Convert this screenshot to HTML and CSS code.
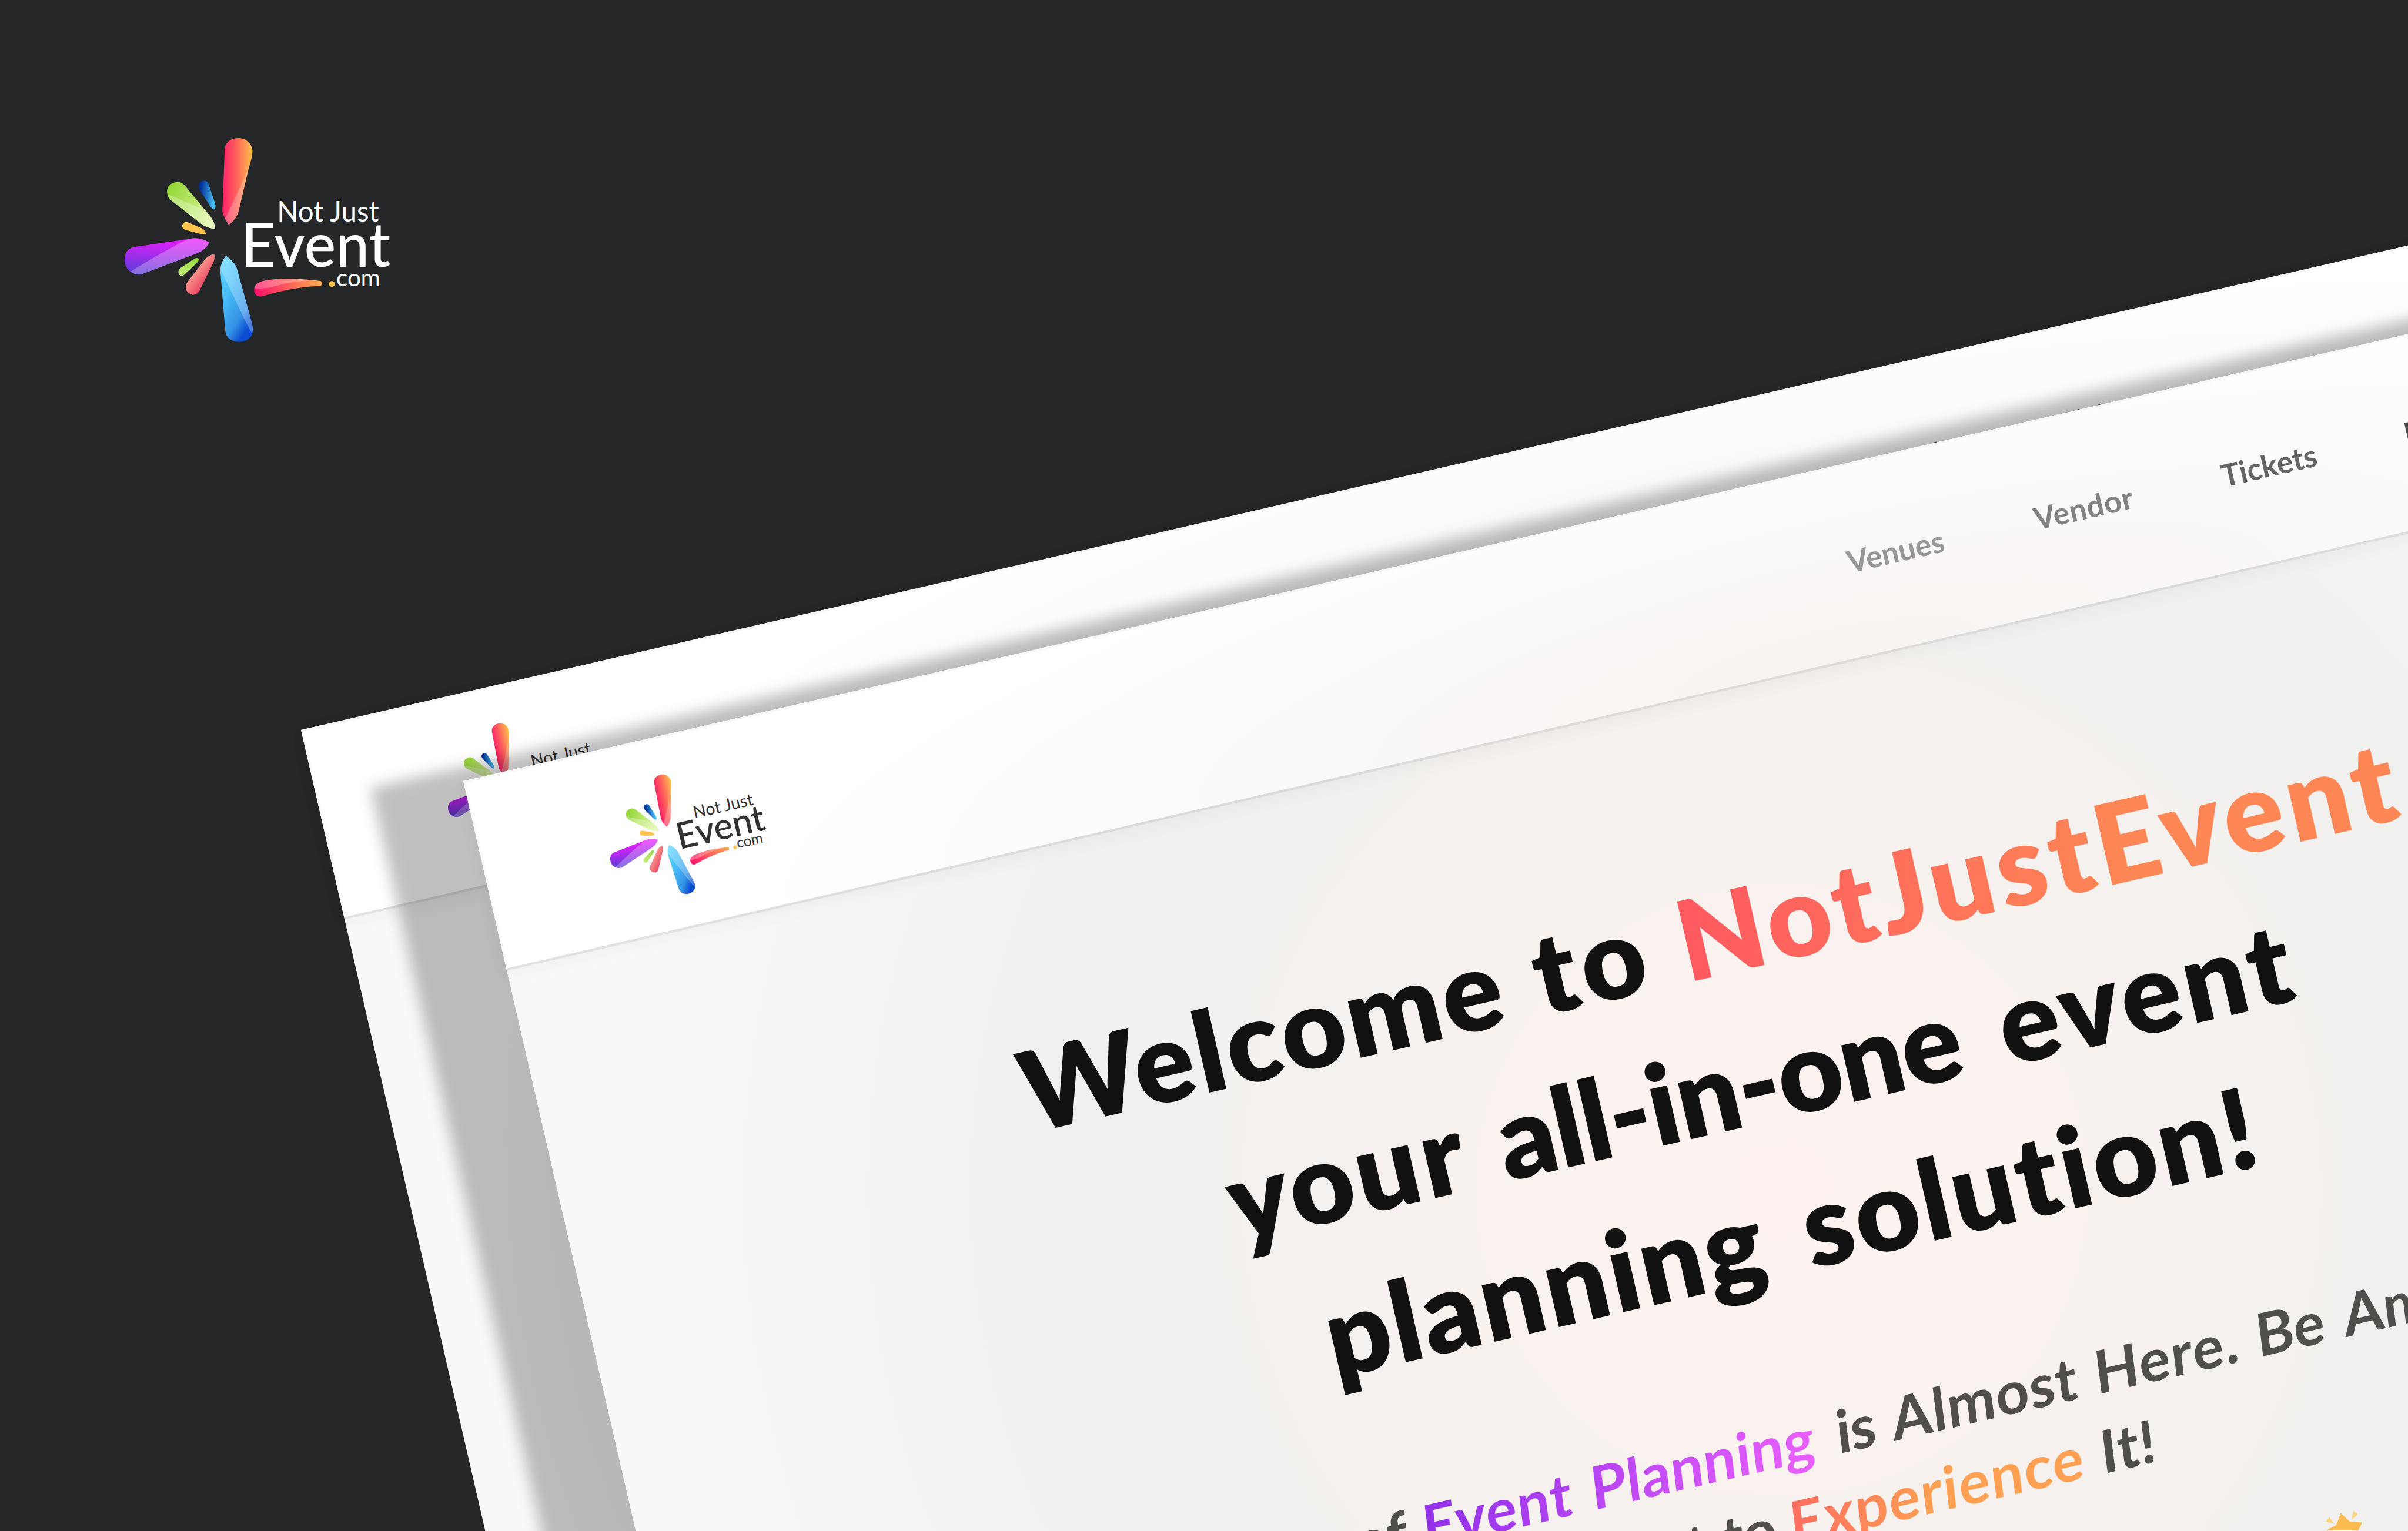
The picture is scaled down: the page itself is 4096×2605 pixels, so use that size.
FILE: index.html
```
<!DOCTYPE html>
<html lang="en">
<head>
<meta charset="utf-8">
<title>Not Just Event</title>
<link rel="stylesheet" href="styles.css">
</head>
<body>
<svg class="defs" aria-hidden="true">
  <defs>
    <linearGradient id="g-red" x1="0" x2="1" y1="0" y2="0"><stop offset="0" stop-color="#ff1f68"/><stop offset=".45" stop-color="#ff5f5c"/><stop offset="1" stop-color="#ffc24c"/></linearGradient>
    <linearGradient id="g-green" x1="0" x2="1" y1="0.1" y2=".7"><stop offset="0" stop-color="#90d632"/><stop offset="1" stop-color="#dff5a0"/></linearGradient>
    <linearGradient id="g-navy" x1="0" x2="1" y1="0.3" y2=".5"><stop offset=".1" stop-color="#00309a"/><stop offset="1" stop-color="#4cc4f4"/></linearGradient>
    <linearGradient id="g-purple" x1=".55" x2=".4" y1="0" y2="1"><stop offset=".05" stop-color="#e41ffb"/><stop offset="1" stop-color="#5a3cd8"/></linearGradient>
    <linearGradient id="g-lime" x1="0" x2="1" y1="1" y2="0"><stop offset="0" stop-color="#cbef80"/><stop offset="1" stop-color="#93d83c"/></linearGradient>
    <linearGradient id="g-salmon" x1=".2" x2=".7" y1=".3" y2=".85"><stop offset="0" stop-color="#fdb49c"/><stop offset="1" stop-color="#e8345a"/></linearGradient>
    <linearGradient id="g-blue" x1=".2" x2=".8" y1="0" y2="1"><stop offset="0" stop-color="#5ad4ff"/><stop offset=".3" stop-color="#4cc0f8"/><stop offset=".7" stop-color="#3492e6"/><stop offset=".9" stop-color="#0c4cd0"/></linearGradient>
    <linearGradient id="g-swoosh" x1="0" x2="1" y1=".5" y2=".4"><stop offset="0" stop-color="#ff1268"/><stop offset="1" stop-color="#ffaa4e"/></linearGradient>
    <symbol id="logo" viewBox="0 0 1568 1320" preserveAspectRatio="none">
      <path fill="url(#g-red)" d="M621 150C622 115 650 86 692 86C740 86 767 125 767 160C765 190 758 220 750 245L696 490C688 530 665 555 643 575C628 550 612 520 609 495Z"/>
      <path fill="#fff" fill-opacity=".25" d="M749 237L696 490C688 530 665 555 643 575L622 540Q720 330 749 237Z"/>
      <path fill="url(#g-green)" d="M320 400C312 360 340 334 372 333C395 333 405 345 413 355L545 525C562 550 570 570 570 596C545 596 520 585 505 575L340 437C328 428 322 415 320 400Z"/>
      <path fill="#fff" fill-opacity=".28" d="M320 400L515 490L545 525C562 550 570 570 570 596C545 596 520 585 505 575L340 437C328 428 322 415 320 400Z"/>
      <path fill="url(#g-navy)" d="M485 358C483 335 500 326 515 326C530 328 534 338 538 350L571 455C574 470 573 480 569 486C560 490 550 478 545 470L492 380Q486 370 485 358Z"/>
      <path fill="#ffc24a" d="M398 583C398 565 408 557 420 558C430 560 440 565 450 570L505 595Q518 605 523 624Q508 629 490 624L418 604Q400 598 398 583Z"/>
      <path fill="url(#g-purple)" d="M95 775C95 730 115 705 145 699L440 652Q490 640 541 674Q520 715 480 733L190 850Q160 862 125 838Q95 810 95 775Z"/>
      <path fill="#fff" fill-opacity=".27" d="M430 653Q490 640 541 674Q520 715 480 733L190 850Q160 862 125 838Q290 728 430 653Z"/>
      <path fill="url(#g-lime)" d="M378 838Q379 826 388 818L462 765Q480 755 485 768Q484 778 478 785L414 850Q404 862 392 862Q378 855 378 838Z"/>
      <path fill="url(#g-salmon)" d="M416 925Q418 905 430 890L520 765Q540 742 567 739Q570 765 562 785L493 935Q483 968 455 968Q418 960 416 925Z"/>
      <path fill="url(#g-blue)" d="M628 748Q670 780 684 815L765 1130Q775 1165 766 1190Q745 1233 695 1233Q630 1228 624 1170L598 830Q600 780 628 748Z"/>
      <path fill="#fff" fill-opacity=".27" d="M628 748Q670 780 684 815L765 1130Q773 1165 764 1186Q735 1130 700 1050L600 825Q602 780 628 748Z"/>
      <path fill="url(#g-swoosh)" d="M776 935Q778 900 830 888Q930 868 1080 885L1125 890Q1135 895 1134 905Q1130 918 1120 918Q980 925 830 972Q800 985 785 968Q774 955 776 935Z"/>
      <path fill="#fff" fill-opacity=".27" d="M776 932Q778 900 830 888Q930 868 1085 886Q950 895 900 915Q840 935 776 932Z"/>
      <ellipse fill="#ffc24a" cx="1184" cy="907" rx="15.500" ry="16.500"/>
      <g fill="currentColor" font-family="Lato, sans-serif">
        <text x="896" y="557" font-size="158" textLength="535" lengthAdjust="spacingAndGlyphs">Not Just</text>
        <text x="706" y="810" font-size="345" font-weight="500" textLength="786" lengthAdjust="spacingAndGlyphs">Event</text>
        <text x="1207" y="921" font-size="136" textLength="232" lengthAdjust="spacingAndGlyphs">com</text>
      </g>
    </symbol>
  </defs>
</svg>

<main class="stage">
  <svg class="brand"><use href="#logo"/></svg>

  <section class="card card-back" aria-hidden="true">
    <header class="bar">
      <svg class="bar-logo"><use href="#logo"/></svg>
      <nav class="nav">
        <a class="n1">Venues</a><a class="n2">Vendor</a><a class="n3">Tickets</a><a class="n4">Home</a><a class="n5">Login</a>
      </nav>
    </header>
  </section>

  <section class="card card-front">
    <header class="bar">
      <svg class="bar-logo"><use href="#logo"/></svg>
      <nav class="nav">
        <a class="n1">Venues</a><a class="n2">Vendor</a><a class="n3">Tickets</a><a class="n4">Home</a>
      </nav>
    </header>
    <h1 class="title">
      <span class="line t1"><span class="w-welcome">Welcome</span> <span class="w-to">to</span> <span class="w-brand">NotJustEvent</span><span>,</span></span>
      <span class="line t2"><span class="w-your">your</span> <span class="w-all">all-in-one</span> <span class="w-event">event</span></span>
      <span class="line t3"><span class="w-planning">planning</span> <span class="w-solution">solution!</span></span>
    </h1>
    <p class="lead">
      <span class="line s1"><span class="lead-start">The Future of</span> <span class="purple"><span class="w-ev">Event</span> <span class="w-pl">Planning</span></span> <span class="w-is">is</span> <span class="w-almost">Almost</span> <span class="w-here">Here.</span> <span class="w-be">Be</span> <span class="w-among">Among</span></span>
      <span class="line s2"><span class="lead-start">First to</span> <span class="orange">Experience</span> <span class="w-it">It!</span></span>
    </p>
  </section>

  <svg class="star" viewBox="430 250 216 114">
    <path fill="#fbbb50" d="M439 363L497 331L520 268Q522 265 525 268L572 313L637 317Q641 318 640 321L619 364V420H439Z"/>
    <path fill="#fad67c" d="M456 287L438 313L486 326ZM592 255L618 271L581 304Z"/>
  </svg>
</main>
</body>
</html>
```
FILE: styles.css
```
* { box-sizing: border-box; }

body {
  margin: 0;
  background: #242628;
  font-family: Lato, "Open Sans", sans-serif;
}

.defs {
  position: absolute;
  width: 0;
  height: 0;
}

.stage {
  position: relative;
  width: 4096px;
  height: 2605px;
  overflow: hidden;
  background: #242628;
}

.brand {
  position: absolute;
  left: 181.4px;
  top: 208.6px;
  width: 507.9px;
  height: 399.1px;
  color: #fff;
}

/* Tilted page mockups */
.card {
  position: absolute;
  width: 4060px;
  height: 3000px;
  transform: rotate(-12.95deg);
  transform-origin: 0 0;
  background: radial-gradient(circle at 2030px 1180px, #fdf2ef 0, #fbf2ef 300px, #f5f1ee 750px, #f0f0ef 1250px, #f3f3f3 1550px, #f8f8f8 1950px);
  color: #111;
}

.card-back { left: 511.9px; top: 1241.7px; }

.card-front {
  left: 788.4px;
  top: 1328.5px;
  box-shadow: -156px -24px 24px rgba(0, 0, 0, .25);
}

.bar {
  position: relative;
  display: flex;
  align-items: flex-start;
  height: 331px;
  border-top: 3px solid #f6f6f6;
  border-left: 3px solid #f9f9f9;
  border-bottom: 4px solid rgba(0, 0, 0, .09);
  background: radial-gradient(ellipse 1900px 420px at 2300px 100%, #f7f3f1, #fff) padding-box;
  box-shadow: 0 6px 30px rgba(0, 0, 0, .04);
}

.bar-logo {
  width: 304.8px;
  height: 239.5px;
  margin: 46px 0 0 191.7px;
  color: #333132;
}

.nav {
  display: flex;
  padding-top: 129px;
  font-size: 52px;
  line-height: 64px;
  font-weight: 700;
  white-space: nowrap;
}

.n1 { margin-left: 1878.500px; width: 326px; letter-spacing: -.2px; color: #989695; }
.n2 { width: 327px; letter-spacing: .7px; color: #848281; }
.n3 { width: 319px; color: #666564; }
.n4 { width: 266px; color: #4a4a4a; }
.card-back .nav a { color: #444; }

.line {
  display: flex;
  white-space: nowrap;
}

.title {
  margin: 266px 0 0;
  font-size: 190px;
  line-height: 261px;
  font-weight: 800;
}

.t1 { padding-left: 806.6px; }
.t2 { padding-left: 1107.8px; }
.t3 { padding-left: 1218px; }

.w-welcome { letter-spacing: 4.6px; }
.w-to { margin-left: 54.3px; letter-spacing: 9px; }
.w-brand {
  margin-left: 52.2px;
  letter-spacing: 8px;
  background: linear-gradient(102deg, #ff5a60 4%, #ff8755 62%);
  -webkit-background-clip: text;
  background-clip: text;
  color: transparent;
}
.w-your { letter-spacing: 5.7px; }
.w-all { margin-left: 57px; letter-spacing: -1.6px; }
.w-event { margin-left: 71px; letter-spacing: 6.4px; }
.w-planning { letter-spacing: 3.7px; }
.w-solution { margin-left: 68px; letter-spacing: 4.6px; }

.lead {
  margin: 154px 0 0;
  font-size: 100px;
  line-height: 134px;
  font-weight: 700;
  color: #504f4c;
}

.lead .line {
  transform: skewX(-6deg);
  transform-origin: 0 105.7px;
}

.lead-start { text-align: right; }
.s1 .lead-start { width: 1275px; }
.s2 .lead-start { width: 1888px; }

.purple, .orange {
  display: flex;
  -webkit-background-clip: text;
  background-clip: text;
  color: transparent;
}
.purple {
  margin-left: 27px;
  background-image: linear-gradient(100deg, #9030e8, #ea60ff);
}
.orange {
  margin-left: 24px;
  letter-spacing: 2px;
  background-image: linear-gradient(100deg, #ff6a60, #ffa052 50%);
}
.w-ev { letter-spacing: 1.4px; }
.w-pl { margin-left: 33px; letter-spacing: .6px; }
.w-is { margin-left: 39px; letter-spacing: -1px; }
.w-almost { margin-left: 29px; letter-spacing: 1.2px; }
.w-here { margin-left: 30.5px; letter-spacing: 2px; }
.w-be { margin-left: 30px; }
.w-among { margin-left: 33.5px; }
.w-it { margin-left: 29px; letter-spacing: 1px; }

.star {
  position: absolute;
  left: 3954px;
  top: 2569.8px;
  width: 65.3px;
  height: 34.5px;
}
```
